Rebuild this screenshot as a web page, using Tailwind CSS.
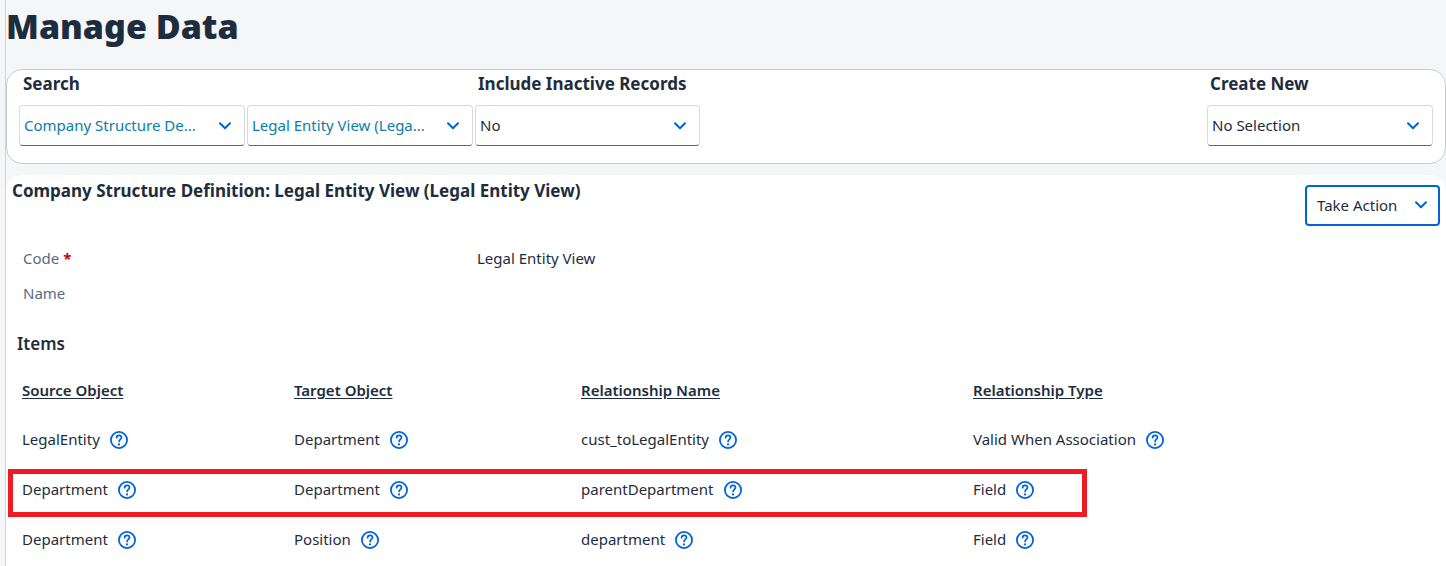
<!DOCTYPE html>
<html lang="en">
<head>
<meta charset="utf-8">
<meta name="viewport" content="width=device-width, initial-scale=1">
<title>Manage Data</title>
<script src="https://cdn.jsdelivr.net/npm/@tailwindcss/browser@4"></script>
</head>
<body class="flex min-h-screen flex-col bg-[#f5f6f7] pl-[5px] font-['Noto_Sans',sans-serif] text-[15px] leading-5 text-[#1d2d3e]">
<svg class="hidden">
  <symbol id="chevron" viewBox="0 0 12 8"><path d="M1 1.2 6 6.2 11 1.2" fill="none" stroke="#0064d9" stroke-width="2" stroke-linecap="round" stroke-linejoin="round"/></symbol>
  <symbol id="help" viewBox="0 0 18 18"><circle cx="9" cy="9" r="8.1" fill="none" stroke="#0064d9" stroke-width="1.8"/><path d="M6.6 6.7C6.6 5.2 7.6 4.3 9 4.3s2.5.9 2.5 2.2c0 1.8-2.4 1.9-2.4 4" fill="none" stroke="#0064d9" stroke-width="1.7" stroke-linecap="round"/><circle cx="9" cy="13.4" r="1.1" fill="#0064d9"/></symbol>
</svg>
<main class="flex grow flex-col border-l border-[#d0d3d8]">
  <h1 class="h-[69px] pt-[2px] text-[34px] leading-[48px] font-black">Manage Data</h1>

  <section class="flex h-[95px] justify-between rounded-2xl border border-[#c8ccd1] bg-white pr-3 pl-3">
    <div class="flex gap-[2px]">
      <div>
        <h2 class="flex h-[35px] items-center pb-2 pl-1 text-[17px] font-bold">Search</h2>
        <div class="flex gap-[2px]">
          <div class="grid w-[226px] items-center">
            <select aria-label="Search object type" class="col-start-1 row-start-1 h-[41px] w-full appearance-none rounded border border-[#d5dade] border-b-[#556b82] bg-white pb-[2px] pl-1 text-[#0a7ea4]"><option>Company Structure De...</option></select>
            <svg class="pointer-events-none col-start-1 row-start-1 mr-[14px] h-2 w-3 justify-self-end"><use href="#chevron"/></svg>
          </div>
          <div class="grid w-[226px] items-center">
            <select aria-label="Search record" class="col-start-1 row-start-1 h-[41px] w-full appearance-none rounded border border-[#d5dade] border-b-[#556b82] bg-white pb-[2px] pl-1 text-[#0a7ea4]"><option>Legal Entity View (Lega...</option></select>
            <svg class="pointer-events-none col-start-1 row-start-1 mr-[14px] h-2 w-3 justify-self-end"><use href="#chevron"/></svg>
          </div>
        </div>
      </div>
      <div class="w-[225px]">
        <label for="inactive" class="flex h-[35px] items-center pb-2 pl-[3px] text-[17px] font-bold">Include Inactive Records</label>
        <div class="grid items-center">
          <select id="inactive" class="col-start-1 row-start-1 h-[41px] w-full appearance-none rounded border border-[#d5dade] border-b-[#556b82] bg-white pb-[2px] pl-1"><option>No</option></select>
          <svg class="pointer-events-none col-start-1 row-start-1 mr-[14px] h-2 w-3 justify-self-end"><use href="#chevron"/></svg>
        </div>
      </div>
    </div>
    <div class="w-[226px]">
      <label for="create" class="flex h-[35px] items-center pb-2 pl-[3px] text-[17px] font-bold">Create New</label>
      <div class="grid items-center">
        <select id="create" class="col-start-1 row-start-1 h-[41px] w-full appearance-none rounded border border-[#d5dade] border-b-[#556b82] bg-white pb-[2px] pl-1"><option>No Selection</option></select>
        <svg class="pointer-events-none col-start-1 row-start-1 mr-[14px] h-2 w-3 justify-self-end"><use href="#chevron"/></svg>
      </div>
    </div>
  </section>

  <section class="mt-[11px] grow rounded-t-2xl bg-white">
    <div class="flex h-[66px] items-start justify-between pr-[6px] pl-[6px]">
      <h2 class="pt-[6px] text-[17px] font-bold">Company Structure Definition: Legal Entity View (Legal Entity View)</h2>
      <button type="button" class="mt-[10px] flex h-[41px] w-[135px] items-center justify-between rounded border-2 border-[#0064d9] bg-white pr-[11px] pb-[2px] pl-[10px]">Take Action <svg class="h-2 w-3"><use href="#chevron"/></svg></button>
    </div>
    <dl class="grid grid-cols-[454px_1fr] pl-[17px] leading-[35px]">
      <dt class="text-[#556b82]">Code <span class="font-bold text-[#c00]">*</span></dt>
      <dd>Legal Entity View</dd>
      <dt class="text-[#556b82]">Name</dt>
      <dd></dd>
    </dl>
    <h3 class="mt-[23px] pl-[11px] text-[17px] font-semibold">Items</h3>
    <table class="mt-3 ml-4 w-[98%] table-fixed text-left">
      <thead>
        <tr class="h-[48px]">
          <th class="w-[272px] font-semibold underline underline-offset-2">Source Object</th>
          <th class="w-[287px] font-semibold underline underline-offset-2">Target Object</th>
          <th class="w-[392px] font-semibold underline underline-offset-2">Relationship Name</th>
          <th class="font-semibold underline underline-offset-2">Relationship Type</th>
        </tr>
      </thead>
      <tbody>
        <tr class="h-[49px]">
          <td><div class="flex items-center gap-[10px]">LegalEntity <button type="button" aria-label="Help" class="mt-[2px] size-[18px]"><svg class="size-[18px]"><use href="#help"/></svg></button></div></td>
          <td><div class="flex items-center gap-[10px]">Department <button type="button" aria-label="Help" class="mt-[2px] size-[18px]"><svg class="size-[18px]"><use href="#help"/></svg></button></div></td>
          <td><div class="flex items-center gap-[10px]">cust_toLegalEntity <button type="button" aria-label="Help" class="mt-[2px] size-[18px]"><svg class="size-[18px]"><use href="#help"/></svg></button></div></td>
          <td><div class="flex items-center gap-[10px]">Valid When Association <button type="button" aria-label="Help" class="mt-[2px] size-[18px]"><svg class="size-[18px]"><use href="#help"/></svg></button></div></td>
        </tr>
        <tr class="h-[51px]">
          <td class="relative"><span class="pointer-events-none absolute top-[6px] -left-[14px] h-[48px] w-[1079px] border-5 border-[#ed1c24]"></span><div class="flex items-center gap-[10px]">Department <button type="button" aria-label="Help" class="mt-[2px] size-[18px]"><svg class="size-[18px]"><use href="#help"/></svg></button></div></td>
          <td><div class="flex items-center gap-[10px]">Department <button type="button" aria-label="Help" class="mt-[2px] size-[18px]"><svg class="size-[18px]"><use href="#help"/></svg></button></div></td>
          <td><div class="flex items-center gap-[10px]">parentDepartment <button type="button" aria-label="Help" class="mt-[2px] size-[18px]"><svg class="size-[18px]"><use href="#help"/></svg></button></div></td>
          <td><div class="flex items-center gap-[10px]">Field <button type="button" aria-label="Help" class="mt-[2px] size-[18px]"><svg class="size-[18px]"><use href="#help"/></svg></button></div></td>
        </tr>
        <tr class="h-[49px]">
          <td><div class="flex items-center gap-[10px]">Department <button type="button" aria-label="Help" class="mt-[2px] size-[18px]"><svg class="size-[18px]"><use href="#help"/></svg></button></div></td>
          <td><div class="flex items-center gap-[10px]">Position <button type="button" aria-label="Help" class="mt-[2px] size-[18px]"><svg class="size-[18px]"><use href="#help"/></svg></button></div></td>
          <td><div class="flex items-center gap-[10px]">department <button type="button" aria-label="Help" class="mt-[2px] size-[18px]"><svg class="size-[18px]"><use href="#help"/></svg></button></div></td>
          <td><div class="flex items-center gap-[10px]">Field <button type="button" aria-label="Help" class="mt-[2px] size-[18px]"><svg class="size-[18px]"><use href="#help"/></svg></button></div></td>
        </tr>
      </tbody>
    </table>
  </section>
</main>
</body>
</html>
